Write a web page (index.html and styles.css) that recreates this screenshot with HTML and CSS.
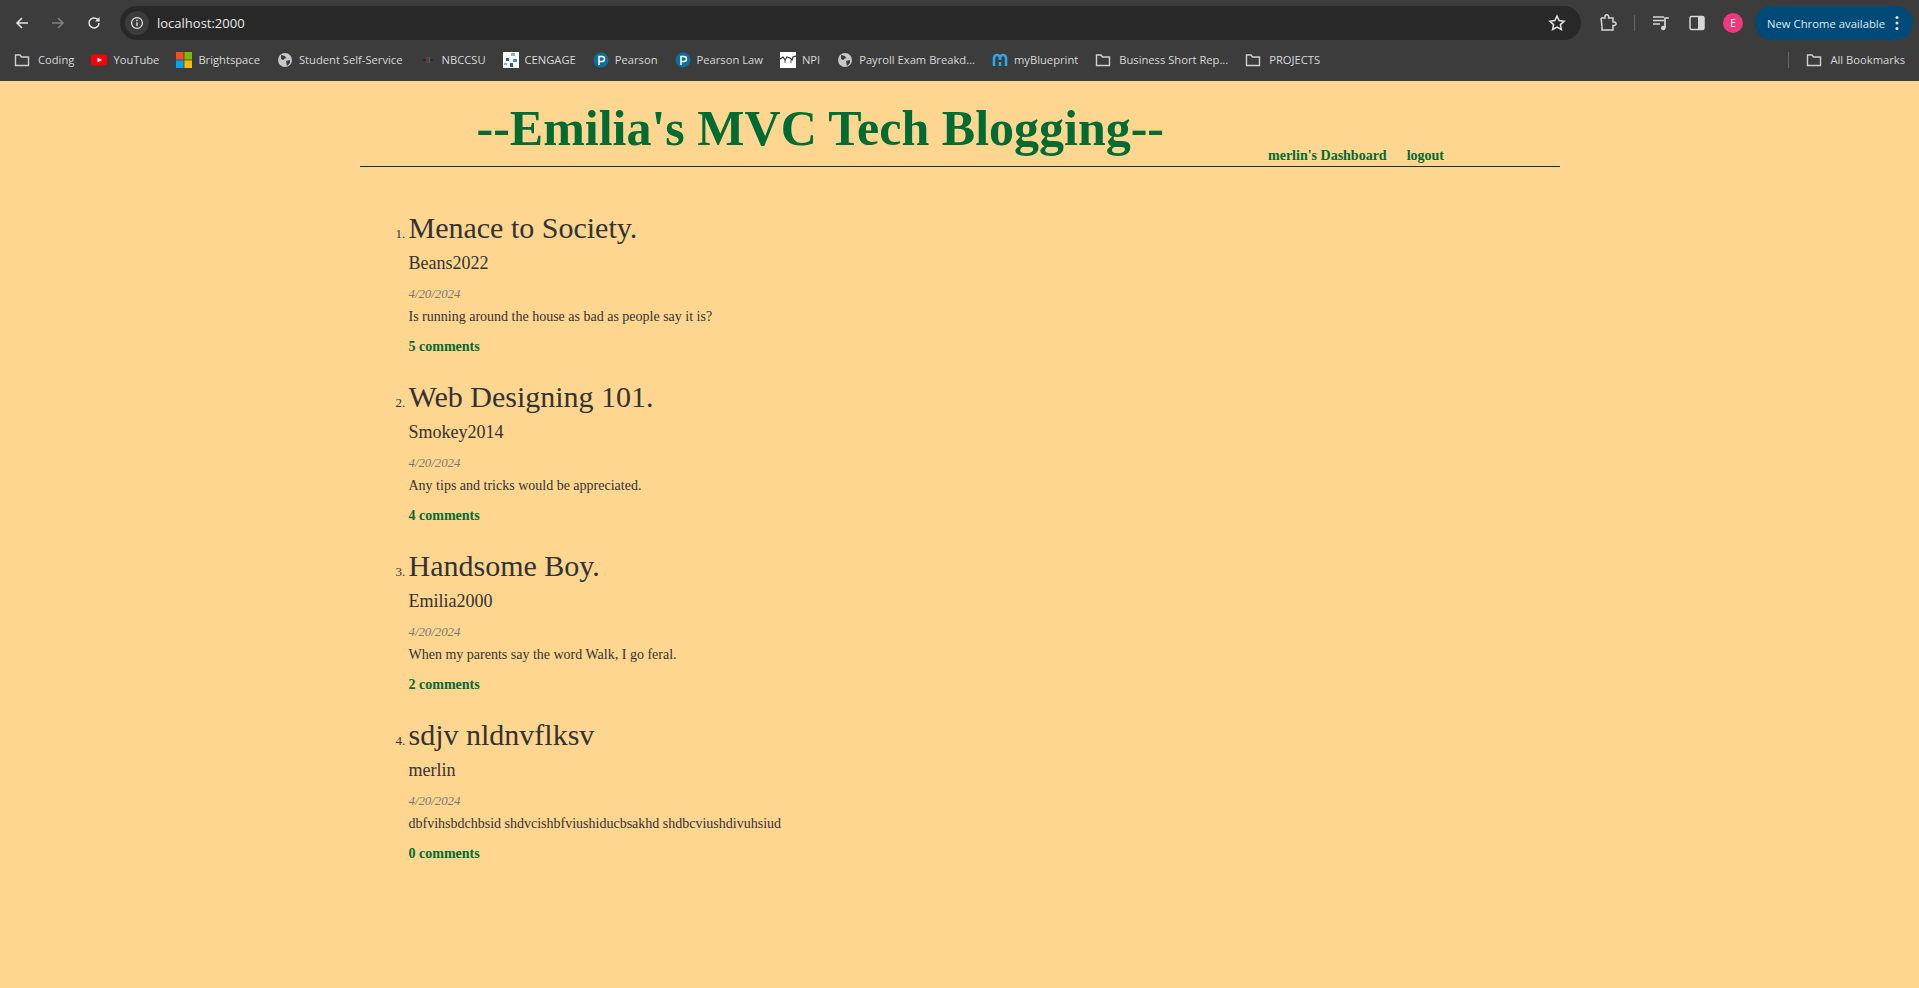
FILE: index.html
```html
<!DOCTYPE html>
<html lang="en">
<head>
<meta charset="utf-8">
<title>Emilia's MVC Tech Blogging</title>
<link rel="stylesheet" href="styles.css">
</head>
<body>
<div class="chrome">
  <div class="toolbar">
    <div class="nav">
      <svg class="nav-ico" viewBox="0 0 16 16"><path d="M14 8H3M8 3L3 8l5 5" fill="none" stroke="#e3e3e3" stroke-width="1.6"/></svg>
      <svg class="nav-ico" viewBox="0 0 16 16"><path d="M2 8h11M8 3l5 5-5 5" fill="none" stroke="#7f7f7f" stroke-width="1.6"/></svg>
      <svg class="nav-ico" viewBox="0 0 16 16"><path d="M13 8a5 5 0 1 1-1.5-3.6L13 6" fill="none" stroke="#e3e3e3" stroke-width="1.5"/><path d="M13.6 2v4.6H9z" fill="#e3e3e3"/></svg>
    </div>
    <div class="omnibox">
      <span class="site-info"><svg viewBox="0 0 16 16" width="14" height="14"><circle cx="8" cy="8" r="6.2" fill="none" stroke="#e3e3e3" stroke-width="1.4"/><path d="M8 7v4.4" stroke="#e3e3e3" stroke-width="1.6"/><circle cx="8" cy="4.9" r="1" fill="#e3e3e3"/></svg></span>
      <span class="url">localhost:2000</span>
      <svg class="star" viewBox="0 0 18 18"><path d="M9 2l2.1 4.6 5 .6-3.7 3.4 1 4.9L9 13l-4.400 2.500 1-4.900L1.900 7.200l5-.6z" fill="none" stroke="#e3e3e3" stroke-width="1.500"/></svg>
    </div>
    <svg class="tool-ico ext" viewBox="0 0 20 20"><path d="M3 5h4V3.500a1.800 1.800 0 0 1 3.600 0V5H15v4h1.200a1.800 1.800 0 0 1 0 3.600H15V17H4v-3.500" fill="none" stroke="#d6d6d6" stroke-width="1.500"/><path d="M3 5l1 8.500" stroke="#d6d6d6" stroke-width="1.500"/></svg>
    <span class="tool-sep"></span>
    <svg class="tool-ico media" viewBox="0 0 20 20"><path d="M2 4h11M2 7.500h11M2 11h7" stroke="#d6d6d6" stroke-width="1.500"/><path d="M14 15V5h4" fill="none" stroke="#d6d6d6" stroke-width="1.700"/><circle cx="12.300" cy="15" r="2.300" fill="#d6d6d6"/></svg>
    <svg class="tool-ico panel" viewBox="0 0 20 20"><rect x="3" y="3.500" width="14" height="13" rx="1.500" fill="none" stroke="#d6d6d6" stroke-width="1.500"/><rect x="11" y="3.500" width="6" height="13" fill="#d6d6d6"/></svg>
    <span class="avatar">E</span>
    <span class="update">New Chrome available<svg class="kebab" viewBox="0 0 4 16"><circle cx="2" cy="2.500" r="1.500"/><circle cx="2" cy="8" r="1.500"/><circle cx="2" cy="13.500" r="1.500"/></svg></span>
  </div>
  <div class="bookmarks">
    <span class="bm bm-folder"><svg class="bi" viewBox="0 0 16 16"><path class="folder" d="M1.500 3h4.500l1.500 2h7v8.500h-13z"/></svg>Coding</span>
    <span class="bm"><svg class="bi" viewBox="0 0 16 16"><rect y="2.500" width="16" height="11" rx="3" fill="#f00"/><path d="M6.500 5.500v5L11 8z" fill="#fff"/></svg>YouTube</span>
    <span class="bm"><svg class="bi" viewBox="0 0 16 16"><rect width="7.600" height="7.600" fill="#f25022"/><rect x="8.400" width="7.600" height="7.600" fill="#7fba00"/><rect y="8.400" width="7.600" height="7.600" fill="#00a4ef"/><rect x="8.400" y="8.400" width="7.600" height="7.600" fill="#ffb900"/></svg>Brightspace</span>
    <span class="bm"><svg class="bi" viewBox="0 0 16 16"><circle cx="8" cy="8" r="7" fill="#c7c7c7"/><path d="M4 3l4 1 1 2-3 2-2-1zM9 9l4-1 0 3-3 3z" fill="#3c3c3c"/></svg>Student Self-Service</span>
    <span class="bm"><svg class="bi" viewBox="0 0 16 16"><rect x="3" y="7" width="10" height="2" fill="#2b2b2b"/><rect x="6" y="5" width="2" height="6" fill="#8a2b3a"/><rect x="8.500" y="5" width="1.500" height="6" fill="#2a6a7a"/></svg>NBCCSU</span>
    <span class="bm"><svg class="bi" viewBox="0 0 16 16"><rect width="16" height="16" fill="#fff"/><rect x="8" y="1" width="4" height="3" fill="#7ab8e0"/><rect x="3" y="6" width="3" height="3" fill="#1f5f8f"/><rect x="10" y="7" width="4" height="3" fill="#3b8fc7"/><rect x="7" y="11" width="3" height="4" fill="#1f5f8f"/><rect x="1" y="11" width="3" height="2" fill="#7ab8e0"/></svg>CENGAGE</span>
    <span class="bm"><svg class="bi" viewBox="0 0 16 16"><circle cx="8" cy="8" r="7.500" fill="#0d6f9c"/><path d="M6 13V4.500h3a2.500 2.500 0 0 1 0 5H6.500" fill="none" stroke="#fff" stroke-width="1.500"/></svg>Pearson</span>
    <span class="bm"><svg class="bi" viewBox="0 0 16 16"><circle cx="8" cy="8" r="7.500" fill="#0d6f9c"/><path d="M6 13V4.500h3a2.500 2.500 0 0 1 0 5H6.500" fill="none" stroke="#fff" stroke-width="1.500"/></svg>Pearson Law</span>
    <span class="bm"><svg class="bi" viewBox="0 0 16 16"><rect width="16" height="16" fill="#fff"/><path d="M0 7l3-2 2 3 2-3 3 1 2 2 1-3 3-1" fill="none" stroke="#333" stroke-width="1.200"/><path d="M5 8v3M11 8v3" stroke="#555"/></svg>NPI</span>
    <span class="bm"><svg class="bi" viewBox="0 0 16 16"><circle cx="8" cy="8" r="7" fill="#c7c7c7"/><path d="M4 3l4 1 1 2-3 2-2-1zM9 9l4-1 0 3-3 3z" fill="#3c3c3c"/></svg>Payroll Exam Breakd...</span>
    <span class="bm"><svg class="bi" viewBox="0 0 16 16"><path d="M2 14V6a3 3 0 0 1 6 0v2M8 6a3 3 0 0 1 6 0v8M8 10v4" fill="none" stroke="#2aa7ea" stroke-width="2.600"/></svg>myBlueprint</span>
    <span class="bm bm-folder"><svg class="bi" viewBox="0 0 16 16"><path class="folder" d="M1.500 3h4.500l1.500 2h7v8.500h-13z"/></svg>Business Short Rep...</span>
    <span class="bm bm-folder"><svg class="bi" viewBox="0 0 16 16"><path class="folder" d="M1.500 3h4.500l1.500 2h7v8.500h-13z"/></svg>PROJECTS</span>
    <span class="bm-sep"></span>
    <span class="bm bm-folder"><svg class="bi" viewBox="0 0 16 16"><path class="folder" d="M1.500 3h4.500l1.500 2h7v8.500h-13z"/></svg>All Bookmarks</span>
  </div>
</div>

<div class="page">
  <header class="site-header">
    <h1 class="site-title">--Emilia's MVC Tech Blogging--</h1>
    <nav class="site-nav">
      <a class="link" href="#">merlin's Dashboard</a>
      <a class="link" href="#">logout</a>
    </nav>
  </header>
  <ol class="posts">
    <li class="post">
      <h2 class="post-title">Menace to Society.</h2>
      <p class="post-author">Beans2022</p>
      <p class="post-date">4/20/2024</p>
      <p class="post-body">Is running around the house as bad as people say it is?</p>
      <a class="link" href="#">5 comments</a>
    </li>
    <li class="post">
      <h2 class="post-title">Web Designing 101.</h2>
      <p class="post-author">Smokey2014</p>
      <p class="post-date">4/20/2024</p>
      <p class="post-body">Any tips and tricks would be appreciated.</p>
      <a class="link" href="#">4 comments</a>
    </li>
    <li class="post">
      <h2 class="post-title">Handsome Boy.</h2>
      <p class="post-author">Emilia2000</p>
      <p class="post-date">4/20/2024</p>
      <p class="post-body">When my parents say the word Walk, I go feral.</p>
      <a class="link" href="#">2 comments</a>
    </li>
    <li class="post">
      <h2 class="post-title">sdjv nldnvflksv</h2>
      <p class="post-author">merlin</p>
      <p class="post-date">4/20/2024</p>
      <p class="post-body">dbfvihsbdchbsid shdvcishbfviushiducbsakhd shdbcviushdivuhsiud</p>
      <a class="link" href="#">0 comments</a>
    </li>
  </ol>
</div>
</body>
</html>
```
FILE: styles.css
```css
* { box-sizing: border-box; }
html, body { margin: 0; padding: 0; }
body {
  min-height: 988px;
  background: #ffd68f;
  font-family: "Liberation Serif", "Times New Roman", serif;
  color: #333;
  overflow: hidden;
}
.chrome {
  height: 81px;
  background: #3c3c3c;
  font-family: "Open Sans", "Noto Sans", sans-serif;
  color: #e3e3e3;
}
.toolbar {
  height: 46px;
  padding-top: 6px;
  display: flex;
  align-items: flex-start;
}
.nav {
  display: flex;
  flex: none;
  width: 120px;
  padding: 9px 0 0 14px;
  gap: 20px;
}
.nav-ico { width: 16px; height: 16px; }
.omnibox {
  flex: none;
  width: 1461px;
  height: 34px;
  background: #282828;
  border-radius: 17px;
  display: flex;
  align-items: center;
  padding-left: 5px;
}
.site-info {
  width: 24px;
  height: 24px;
  border-radius: 50%;
  background: #3c3c3c;
  display: flex;
  align-items: center;
  justify-content: center;
}
.url { font-size: 13px; margin-left: 8px; color: #e8e8e8; }
.star { width: 18px; height: 18px; margin-left: auto; margin-right: 15px; }
.tool-ico { width: 20px; height: 20px; margin-top: 7px; flex: none; }
.ext { margin-left: 17px; }
.tool-sep { flex: none; width: 1px; height: 16px; background: #666; margin: 9px 0 0 16px; }
.media { margin-left: 16px; }
.panel { margin-left: 16px; }
.avatar {
  flex: none;
  width: 20px;
  height: 20px;
  margin: 7px 0 0 16px;
  border-radius: 50%;
  background: #ee3a7c;
  color: #fff;
  font-size: 10px;
  display: flex;
  align-items: center;
  justify-content: center;
}
.update {
  flex: none;
  width: 158px;
  height: 34px;
  margin-left: 12px;
  padding-left: 12px;
  border-radius: 17px;
  background: #004a77;
  color: #d8ecf8;
  font-size: 11.3px;
  display: flex;
  align-items: center;
  white-space: nowrap;
}
.kebab { width: 4px; height: 16px; margin-left: 10px; fill: #d8ecf8; }
.bookmarks {
  height: 35px;
  padding: 0 14px 8px 14px;
  display: flex;
  align-items: center;
  gap: 17px;
}
.bm {
  display: flex;
  align-items: center;
  gap: 6px;
  font-size: 11.2px;
  color: #d8d8d8;
  white-space: nowrap;
}
.bm-folder { gap: 8px; }
.bi { width: 16px; height: 16px; flex: none; }
.folder { fill: none; stroke: #d0d0d0; stroke-width: 1.400; }
.bm-sep { width: 1px; height: 16px; background: #666; margin-left: auto; }

.page {
  width: 1200px;
  margin: 0 auto;
}
.site-header {
  height: 86px;
  border-bottom: 1px solid #0d3a14;
  display: flex;
  align-items: flex-start;
}
.site-title {
  margin: 19px 0 0 117px;
  font-size: 50px;
  line-height: 57px;
  color: #006b33;
  font-weight: bold;
}
.site-nav {
  display: flex;
  gap: 20px;
  margin: 67px 0 0 104px;
}
.link {
  font-size: 14px;
  line-height: 16px;
  font-weight: bold;
  color: #006b33;
  text-decoration: none;
}
.posts {
  margin: 0;
  padding: 43px 0 0 49px;
  font-size: 13px;
}
.post { height: 169px; }
.post-title {
  margin: 0;
  font-size: 30px;
  line-height: 35px;
  font-weight: normal;
}
.post-author { margin: 8px 0 0; font-size: 18px; line-height: 21px; }
.post-date { margin: 13px 0 0; font-size: 12.8px; line-height: 14px; font-style: italic; color: #777; }
.post-body { margin: 8px 0 0; font-size: 14px; line-height: 16px; }
.post .link { display: block; margin-top: 14px; }
```
